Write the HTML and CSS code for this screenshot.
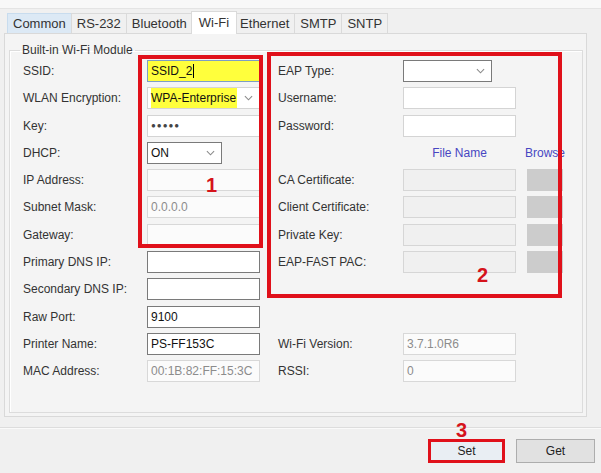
FILE: index.html
```html
<!DOCTYPE html>
<html lang="en">
<head>
    <meta charset="UTF-8">
    <title>Wi-Fi Settings</title>
    <link rel="stylesheet" href="styles.css">
</head>
<body>
<div class="window">
    <div class="topbar"></div>
    <ul class="tabs">
        <li class="tab hover">Common</li>
        <li class="tab">RS-232</li>
        <li class="tab">Bluetooth</li>
        <li class="tab active">Wi-Fi</li>
        <li class="tab">Ethernet</li>
        <li class="tab">SMTP</li>
        <li class="tab">SNTP</li>
    </ul>

    <div class="page">
        <fieldset class="group">
            <legend>Built-in Wi-Fi Module</legend>
            <div class="form">
                <!-- row 1 -->
                <div class="lbl c1">SSID:</div>
                <div class="box focus c2">SSID_2<span class="caret"></span></div>
                <div class="lbl c4">EAP Type:</div>
                <div class="box select eap c5"><span></span><svg class="chev" viewBox="0 0 10 6"><polyline points="1,1 5,5 9,1"/></svg></div>

                <!-- row 2 -->
                <div class="lbl c1">WLAN Encryption:</div>
                <div class="box select light c2"><span class="hl">WPA-Enterprise</span><svg class="chev" viewBox="0 0 10 6"><polyline points="1,1 5,5 9,1"/></svg></div>
                <div class="lbl c4">Username:</div>
                <div class="box light c5"></div>

                <!-- row 3 -->
                <div class="lbl c1">Key:</div>
                <div class="box light c2 dots">&#9679;&#9679;&#9679;&#9679;&#9679;</div>
                <div class="lbl c4">Password:</div>
                <div class="box light c5"></div>

                <!-- row 4 -->
                <div class="lbl c1">DHCP:</div>
                <div class="box select dhcp c2"><span>ON</span><svg class="chev" viewBox="0 0 10 6"><polyline points="1,1 5,5 9,1"/></svg></div>
                <div class="head c5">File Name</div>
                <div class="head c7">Browse</div>

                <!-- row 5 -->
                <div class="lbl c1">IP Address:</div>
                <div class="box off c2"></div>
                <div class="lbl c4">CA Certificate:</div>
                <div class="box dis c5"></div>
                <div class="browse c7"></div>

                <!-- row 6 -->
                <div class="lbl c1">Subnet Mask:</div>
                <div class="box off c2">0.0.0.0</div>
                <div class="lbl c4">Client Certificate:</div>
                <div class="box dis c5"></div>
                <div class="browse c7"></div>

                <!-- row 7 -->
                <div class="lbl c1">Gateway:</div>
                <div class="box off c2"></div>
                <div class="lbl c4">Private Key:</div>
                <div class="box dis c5"></div>
                <div class="browse c7"></div>

                <!-- row 8 -->
                <div class="lbl c1">Primary DNS IP:</div>
                <div class="box c2"></div>
                <div class="lbl c4">EAP-FAST PAC:</div>
                <div class="box dis c5"></div>
                <div class="browse c7"></div>

                <!-- row 9 -->
                <div class="lbl c1">Secondary DNS IP:</div>
                <div class="box c2"></div>

                <!-- row 10 -->
                <div class="lbl c1">Raw Port:</div>
                <div class="box c2">9100</div>

                <!-- row 11 -->
                <div class="lbl c1">Printer Name:</div>
                <div class="box c2">PS-FF153C</div>
                <div class="lbl c4">Wi-Fi Version:</div>
                <div class="box off c5">3.7.1.0R6</div>

                <!-- row 12 -->
                <div class="lbl c1">MAC Address:</div>
                <div class="box off c2">00:1B:82:FF:15:3C</div>
                <div class="lbl c4">RSSI:</div>
                <div class="box off c5">0</div>
            </div>
        </fieldset>
    </div>

    <div class="footer">
        <button class="btn set">Set</button>
        <button class="btn">Get</button>
    </div>

    <!-- red annotations -->
    <div class="mark mark-1"></div>
    <div class="mark mark-2"></div>
    <div class="mark mark-3"></div>
    <div class="num num-1">1</div>
    <div class="num num-2">2</div>
    <div class="num num-3">3</div>
</div>
</body>
</html>
```

FILE: styles.css
```css
body {
    margin: 0;
    background: #f0f0f0;
    font-family: "Liberation Sans", Arial, sans-serif;
    font-size: 12px;
    color: #333;
}
.window {
    position: relative;
    width: 601px;
    height: 473px;
    overflow: hidden;
}
.topbar {
    height: 8px;
    background: #f8f8f8;
    border-bottom: 1px solid #e4e4e4;
}

/* tabs */
.tabs {
    list-style: none;
    margin: 0;
    padding: 4px 0 0 8px;
    display: flex;
    align-items: flex-end;
    height: 20px;
}
.tab {
    height: 19px;
    line-height: 19px;
    padding: 0 5px;
    font-size: 13px;
    border: 1px solid #dadada;
    border-bottom: none;
    margin-left: -1px;
    background: #f0f0f0;
    color: #333;
}
.tab.hover { background: #dce9f5; border-color: #c8dcee; }
.tab.active {
    position: relative;
    z-index: 2;
    height: 22px;
    line-height: 21px;
    margin: 0 -2px -1px -2px;
    padding: 0 7px;
    background: #fff;
}

/* tab page */
.page {
    margin-left: 4px;
    width: 583px;
    height: 384px;
    border: 1px solid #d9d9d9;
    background: #f4f4f4;
    padding: 9px 0 0 4px;
    box-sizing: border-box;
}
.group {
    margin: 0;
    width: 574px;
    height: 370px;
    box-sizing: border-box;
    border: 1px solid #dcdcdc;
    box-shadow: inset 1px 1px 0 #fff;
    padding: 3px 19px 0 13px;
}
.group legend {
    font-size: 12px;
    line-height: 14px;
    padding: 0 2px;
    margin-left: -3px;
    color: #333;
}

/* form grid */
.form {
    display: grid;
    grid-template-columns: 124px 113px 18px 125px 113px 11px 36px;
    grid-auto-rows: 22px;
    row-gap: 5.3px;
}
.c1 { grid-column: 1; }
.c2 { grid-column: 2; }
.c4 { grid-column: 4; }
.c5 { grid-column: 5; }
.c7 { grid-column: 7; }

.lbl {
    line-height: 22px;
    white-space: nowrap;
}
.box {
    box-sizing: border-box;
    height: 22px;
    border: 1px solid #7a7a7a;
    background: #fff;
    color: #111;
    padding: 0 3px;
    line-height: 20px;
    white-space: nowrap;
    overflow: hidden;
}
.box.light { border-color: #d4d4d4; }
.box.off { border-color: #d8d8d8; background: #fbfbfb; color: #8c8c8c; }
.box.dis { border-color: #d6d6d6; background: #f0f0f0; }
.box.focus {
    background: #ffff3c;
    border-color: #7d9ec4;
    display: flex;
    align-items: center;
}
.caret {
    display: inline-block;
    width: 1px;
    height: 14px;
    background: #000;
    margin-left: 1px;
}
.dots { font-size: 8px; letter-spacing: 1px; color: #444; }

.select {
    display: flex;
    align-items: center;
    justify-content: space-between;
    padding-right: 6px;
}
.select .hl { background: #ffff3c; padding-right: 1px; }
.select.dhcp { width: 75px; }
.select.eap { width: 89px; }
.chev {
    width: 9px;
    height: 6px;
    fill: none;
    stroke: #8a8a8a;
    stroke-width: 1.2;
}

.head {
    text-align: center;
    line-height: 22px;
    color: #4747c2;
    white-space: nowrap;
}
.head.c7 { width: 36px; display: flex; justify-content: center; }
.browse { background: #cccccc; }

/* bottom buttons */
.footer {
    margin-top: 10px;
    border-top: 1px solid #dddddd;
    box-shadow: inset 0 1px 0 #fafafa;
    padding: 11px 6px 0 0;
    display: flex;
    justify-content: flex-end;
    gap: 11px;
}
.btn {
    height: 24px;
    width: 79px;
    font-family: "Liberation Sans", Arial, sans-serif;
    font-size: 12px;
    color: #222;
    background: #e1e1e1;
    border: 1px solid #adadad;
    padding: 0;
}
.btn.set { width: 77px; background: #e9eef3; }

/* annotations */
.mark {
    position: absolute;
    border: 4px solid #e0101a;
    box-sizing: border-box;
}
.mark-1 { left: 138px; top: 55px; width: 125px; height: 193px; }
.mark-2 { left: 267px; top: 52px; width: 295px; height: 246px; }
.mark-3 { left: 428px; top: 439px; width: 77px; height: 24px; border-width: 3px; }
.num {
    position: absolute;
    font-weight: bold;
    font-size: 20px;
    line-height: 20px;
    color: #d5131b;
}
.num-1 { left: 206px; top: 175px; }
.num-2 { left: 477px; top: 265px; }
.num-3 { left: 456px; top: 420px; }
```
